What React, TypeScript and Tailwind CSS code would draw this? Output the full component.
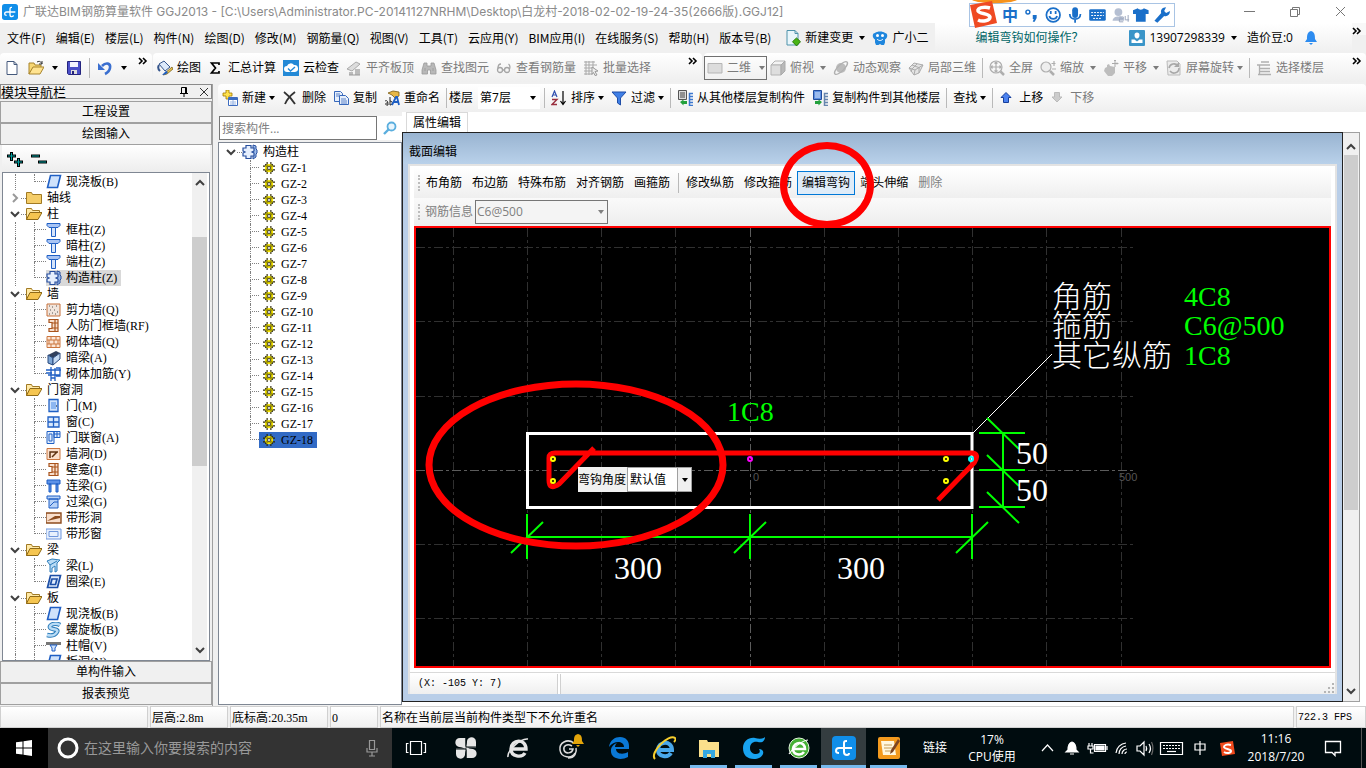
import type { ReactNode } from "react";

const blue = "#1f5fc4";

const icons: Record<string, ReactNode> = {
  new: <path d="M3 1.5h7l3 3v10H3zM10 1.5v3h3" fill="#fff" stroke="#44597c" />,
  open: (
    <>
      <path d="M1 14V3h5l1 2h6v3H5z" fill="#f7d774" stroke="#a8842c" />
      <path d="M1 14l4-7h11l-4 7z" fill="#ffe390" stroke="#a8842c" />
      <path d="M9 2c3-1.500 4 0 5 2m0-3v3h-3" fill="none" stroke="#333" />
    </>
  ),
  save: (
    <>
      <path d="M1.500 1.500h13v13h-12l-1-1z" fill="#4b4fc8" stroke="#24247e" />
      <path d="M4 2h8v5H4z" fill="#f4f4ff" />
      <path d="M5 10h6v4H5z" fill="#ddd" />
      <path d="M6 11h2v3H6z" fill="#24247e" />
    </>
  ),
  undo: (
    <>
      <path d="M5 6c4-4 9-3 8 2-.5 3-3 5-5 6" fill="none" stroke="#3a6fd0" strokeWidth="2.600" />
      <path d="M1 3v7h7z" fill="#3a6fd0" />
    </>
  ),
  paint: (
    <>
      <path d="M2 4l5-3 6 6-5 4z" fill="#dce9fa" stroke="#36568c" />
      <path d="M2 5c-2 3 0 5 1 6" fill="none" stroke="#36568c" strokeWidth="2" />
      <path d="M15 7l-7 6-2 2 4-1 6-5z" fill="#e8c04a" stroke="#6b5310" strokeWidth=".7" />
      <path d="M5 15c3 0 5-1 6-3l-2-1z" fill={blue} />
    </>
  ),
  sigma: <path d="M11 5V3H3.500l4 5-4 5H11v-2" fill="none" stroke="#000" strokeWidth="1.700" />,
  cloud: (
    <>
      <path d="M0 0h16v16H0z" fill="#2389d6" />
      <path d="M4 12a3 3 0 010-6 4 4 0 017-1 3.500 3.500 0 011 7z" fill="#fff" />
      <path d="M5 8.500l2.500 2.500L12 7" fill="none" stroke="#2389d6" strokeWidth="1.400" />
    </>
  ),
  slab: (
    <>
      <path d="M1 9l9-7 4 2-8 7z" fill="#ddd" stroke="#aaa" />
      <path d="M3 12h4v3H3zM9 9h5v6H9z" fill="#bbb" />
      <path d="M3 15h11" stroke="#999" />
    </>
  ),
  binoc: <path d="M3 3h3v3h4V3h3l2 7v4H9.500v-4h-3v4H1v-4zM4 8v3M12 8v3" fill="#b8b8b8" stroke="#999" strokeWidth=".8" />,
  glasses: (
    <g fill="none" stroke="#a5a5a5" strokeWidth="1.300">
      <circle cx="4" cy="10" r="2.500" />
      <circle cx="11" cy="10" r="2.500" />
      <path d="M6.500 10h2M2 8c0-3 1-4 3-4M13.500 9c1-3 .5-4-1-5" />
    </g>
  ),
  grid: (
    <>
      <path d="M1 2h11M1 5h13M1 8h10M1 11h8M1 14h8M3 1v14M6 1v14M10 1v8" stroke="#a9a9a9" fill="none" />
      <path d="M9 7l6 4-3 .5 2 3.500-2 .5-1.500-3-1.500 2z" fill="#eee" stroke="#999" />
    </>
  ),
  rect2d: <path d="M1 3.500h14v9.500H1z" fill="#dcdcdc" stroke="#b5b5b5" />,
  cube: (
    <>
      <path d="M1 5l4-4h10l-4 4z" fill="#f4f4f4" stroke="#b4b4b4" />
      <path d="M1 5h10v10H1z" fill="#dedede" stroke="#b4b4b4" />
      <path d="M11 5l4-4v10l-4 4z" fill="#b9b9b9" stroke="#aaa" />
    </>
  ),
  planet: (
    <>
      <circle cx="8" cy="8" r="5" fill="#bcbcbc" />
      <ellipse cx="8" cy="8" rx="8.500" ry="3" fill="none" stroke="#b0b0b0" strokeWidth="1.300" transform="rotate(-45 8 8)" />
    </>
  ),
  local3d: (
    <g fill="#e4e4e4" stroke="#acacac">
      <path d="M1 8l5-5 9 2-4 8-5 2z" />
      <path d="M1 8l6 2 8-5M7 10l-1 5M4 5l8 3M9 4L4 9l-1 3M11 8v5" fill="none" />
    </g>
  ),
  full: (
    <g fill="none" stroke="#aeaeae" strokeWidth="1.200">
      <circle cx="7" cy="7" r="6" />
      <path d="M7 2v10M2 7h10M5.500 3.500L7 2l1.500 1.500M5.500 10.500L7 12l1.500-1.500M3.500 5.500L2 7l1.500 1.500M10.500 5.500L12 7l-1.500 1.500" />
      <path d="M11.500 11.500l3.500 3.500" strokeWidth="2.500" />
    </g>
  ),
  zoom: (
    <g fill="none" stroke="#aeaeae" strokeWidth="1.200">
      <circle cx="6" cy="7" r="5" fill="#eee" />
      <path d="M10 11l4 4" strokeWidth="2.500" />
      <path d="M14 1v5M11.500 3.500h4M12 9h4" />
    </g>
  ),
  pan: (
    <>
      <path d="M2 8l2-1V5l2-1 1 2 5 1v6l-3 3H5l-4-5z" fill="#bdbdbd" />
      <path d="M12 0v7M9 3.500h6M11 1l1-1 1 1M14 2.500l1 1-1 1" stroke="#aaa" fill="none" />
    </>
  ),
  rotate: (
    <>
      <path d="M1 1h10l3 3v11H2z" fill="#ececec" stroke="#bbb" />
      <path d="M3 8a5 5 0 019-2M13 8a5 5 0 01-9 3" fill="none" stroke="#a8a8a8" strokeWidth="1.600" />
      <path d="M13 2v5H8z" fill="#a8a8a8" />
    </>
  ),
  floors: <path d="M1 5h13M5 2h8M3 8.500h11M3 11.500h11M2 14.500h13M3.500 5v9" fill="none" stroke="#b0b0b0" strokeWidth="1.300" />,
  add: (
    <>
      <path d="M4 0h3v3h3v3H7v3H4V6H1V3h3z" fill="#ffe24d" stroke="#a27a00" strokeWidth=".8" />
      <path d="M6.500 7.500h9v8h-9z" fill="#fff" stroke="#3d6cc0" />
      <path d="M7 8h8v2H7z" fill="#3d6cc0" />
      <path d="M8 12h6M8 14h6M11 10v5" stroke="#9cb7e4" />
    </>
  ),
  del: <path d="M2 2c4 3 8 7 11 12M13 2C9 5 5 9 3 14" fill="none" stroke="#333" strokeWidth="1.800" />,
  copy: (
    <g fill="#e6effc" stroke="#3768bb">
      <path d="M1.500 1.500h6l2 2v8h-8z" />
      <path d="M6.500 5.500h6l3 3v6h-9z" />
      <path d="M3 4h4M3 6h3M8 9h5M8 11h6M8 13h6" strokeWidth=".8" />
    </g>
  ),
  rename: (
    <>
      <path d="M4 3l5-2 6 1v4l-4 2-3-3z" fill="#e7b746" stroke="#7a5a12" strokeWidth=".8" />
      <path d="M1 11c2-1 3 0 3 4M4 13c-3-1-3 3 0 2M6 7v8c3 0 3-4 0-4" fill="none" stroke="#222" />
      <path d="M8 15l4-8h1l2 8M10 12h4" fill="none" stroke={blue} strokeWidth="1.800" />
    </>
  ),
  sort: (
    <>
      <path d="M1 7l2.500-6L6 7M2 5h3" fill="none" stroke="#2f4fb0" strokeWidth="1.200" />
      <path d="M1 9.500h5l-5 5h5" fill="none" stroke="#9a2f3f" strokeWidth="1.400" />
      <path d="M12 1v13M9.500 11l2.500 3.500 2.500-3.500" fill="none" stroke="#000" strokeWidth="1.200" />
    </>
  ),
  filter: <path d="M1 2h14L9.500 8v7l-3-2V8z" fill="#3f7fe6" stroke="#1f4da6" />,
  fromFloor: (
    <>
      <path d="M1.500.5h8v9h-8z" fill="#ddd" stroke="#555" />
      <path d="M3 3h5M3 5h5M3 7h5" stroke="#444" />
      <path d="M16 3.500h-3.500v12H16M12.500 6.500H16M12.500 9.500H16M12.500 12.500H16" stroke="#3c78cf" strokeWidth="1.500" fill="none" />
      <path d="M3 12l3.500-2.500V11H10v3H6.500v1.500z" fill="#23a13c" />
    </>
  ),
  toFloor: (
    <>
      <path d="M1.500.5h8v9h-8z" fill="#5d8fe0" stroke="#224c9c" />
      <path d="M3 3h5M3 5h5M3 7h5" stroke="#dbe7fb" />
      <path d="M16 3.500h-3.500v12H16M12.500 6.500H16M12.500 9.500H16M12.500 12.500H16" stroke="#6685ad" strokeWidth="1.500" fill="none" />
      <path d="M10 12L6.500 9.500V11H3v3h3.500v1.500z" fill="#23a13c" />
    </>
  ),
  up: <path d="M7 2.500l5 5H9.500v5h-5v-5H2z" fill="#4b82f0" stroke="#173f9c" />,
  down: <path d="M7 12l5-5H9.500V2.500h-5V7H2z" fill="#ccc" stroke="#bbb" />,
  doc: (
    <>
      <path d="M2 .5h8l3 3V15H2z" fill="#eaf6fb" stroke="#4f93ab" />
      <path d="M10 .5v3h3" fill="none" stroke="#4f93ab" />
      <path d="M11.500 8l4 3.700-4 4.200-4-4.200z" fill="#48b414" stroke="#2a7a08" />
    </>
  ),
  owl: (
    <>
      <path d="M3 3c2-2 8-2 10 0 3 0 3 5 0 6.500v3L12 15H9.500L8 14l-1.500 1H4l-1-2.500v-3C0 8 0 3 3 3z" fill="#1f86dd" />
      <circle cx="5.500" cy="5.500" r="1.500" fill="#fff" />
      <circle cx="10.500" cy="5.500" r="1.500" fill="#fff" />
      <path d="M5 9c2 2 4 2 6 0" stroke="#fff" fill="none" />
    </>
  ),
  user: (
    <>
      <rect width="16" height="16" rx="1" fill="#3a95c8" />
      <path d="M5.500 5a2.500 2.500 0 015 0c0 2-1 3.500-2.500 3.500S5.500 7 5.500 5zM2.500 13V9.500h3l2.500 2 2.500-2h3V13z" fill="#fff" />
    </>
  ),
  bell: <path d="M8 1c4 1 4 5 4 8l2 3H2l2-3c0-3 0-7 4-8zM6 13h4l-2 2z" fill="#2d8cf0" />,
  folder: <path d="M.5 13.500v-11h5l1 2h9v9z" fill="#f5cd68" stroke="#a17a24" />,
  folderOpen: (
    <>
      <path d="M.5 13.500v-11h5l1 2h7v3H4z" fill="#ffe9a6" stroke="#a17a24" />
      <path d="M.5 13.500L4 6.500h12l-4 7z" fill="#f5c550" stroke="#8f6a17" />
    </>
  ),
  board: <path d="M4.500 1.500h10l-3 12h-10z" fill="#cfe2fb" stroke={blue} strokeWidth="1.600" />,
  column: (
    <>
      <path d="M1 1.500h13v2l-2 2H3l-2-2z" fill="#a8c4f4" stroke={blue} />
      <path d="M5.500 5.500h4v9h-4z" fill="#d5e4fb" stroke={blue} />
    </>
  ),
  gz: (
    <>
      <path d="M11 1l3 1v3l1 1v3l-1 1v3l-3 2z" fill="#9dbcec" stroke="#274f9f" />
      <path d="M4 1.500h5V4h3v3l-2 1 2 1v3H9v2.500H4V12H1V9l2-1-2-1V4h3z" fill="#e6effd" stroke="#274f9f" strokeWidth="1.200" />
    </>
  ),
  wallDots: (
    <>
      <path d="M1 2h13v12H1z" fill="#f1e5dc" stroke="#c6713b" />
      <path d="M3 4h1M6 5h1M10 4h1M4 8h1M8 8h1M11 10h1M3 12h1M6 11h1M9 12h1" stroke="#555" />
    </>
  ),
  wallI: <path d="M3 1.500h9v12H3v-3h3v-6H3zM9 2v12M6 5h6M6 10h6" fill="#f8dfcd" stroke="#a9541d" strokeWidth="1.200" />,
  brick: <path d="M1 2.500h13v11H1zM1 6h13M1 10h13M5 3v3M10 3v3M3 6v4M8 6v4M12 6v4M5 10v4M10 10v4" fill="#fbe6d7" stroke="#cb763f" />,
  darkBeam: (
    <>
      <path d="M2 5l8-4 4 2-7 5z" fill="#32415d" />
      <path d="M2 5l5 3v7l-5-2z" fill="#7da6d6" stroke="#28487c" />
      <path d="M7 8l7-5v6l-7 6z" fill="#c6dbf3" stroke="#28487c" />
    </>
  ),
  mesh: <path d="M0 4h15M2 9h12M5 1v14M9 2v13M0 7h6M10 2h4v8h-4M5 12h4" fill="none" stroke={blue} strokeWidth="1.300" />,
  door: (
    <>
      <path d="M3 1.500h9v12H3z" fill="#cfe3fc" stroke={blue} strokeWidth="1.300" />
      <path d="M5 4h5v7H5z" fill="#8db7f1" />
      <path d="M10 8h1" stroke="#111" />
    </>
  ),
  window: <path d="M2 3h11v10H2zM7.500 3v10M2 8h11" fill="#d8e9fd" stroke={blue} strokeWidth="1.300" />,
  doorWindow: <path d="M1 1.500h7v12H1zM3 4h3v7H3zM8 1.500h6v6H8zM11 1.500v6M8 4h6" fill="#e1edfd" stroke={blue} />,
  hole: (
    <>
      <path d="M1 2.500h13v11H1z" fill="#fbe0cd" stroke="#cb763f" />
      <path d="M4 12V6h8M6 11l5-5" fill="none" stroke="#5f3212" strokeWidth="1.500" />
    </>
  ),
  linkBeam: <path d="M1 2h13v4H1zM3 6h2v8H3zM10 6h2v8h-2z" fill="#5d92e8" stroke={blue} />,
  overBeam: <path d="M1 2h13v3H1zM3 5h9v9H3zM4 12l4-4h4" fill="#b7d2f8" stroke={blue} />,
  stripHole: (
    <>
      <path d="M0 3h15v10H0z" fill="#f9dfcc" stroke="#8d4c1e" strokeWidth="1.400" />
      <path d="M1 11l8-5h5v2z" fill="#8d4c1e" />
    </>
  ),
  stripWindow: <path d="M0 3h15v10H0zM3 5.500h9v5H3z" fill="#e7f0fd" stroke="#6e96dc" />,
  beam: <path d="M1 3l5-2 8 1-3 3v8l-2 1V8l-3 2v4H4V7zM4 7l7-4" fill="#b9dcf6" stroke="#2d7dbb" />,
  ring: <path d="M4.500 1.500h10l-3 12h-10zM6 5h5l-1.500 5.500h-5z" fill="#e2edfc" stroke="#1d4fa6" strokeWidth="1.700" />,
  spiral: (
    <>
      <path d="M14 3C9 0 3 3 4 5.500s9 1 7 4.500-6 4-10 3" fill="none" stroke="#2d7dbb" strokeWidth="4.500" />
      <path d="M14 3C9 0 3 3 4 5.500s9 1 7 4.500-6 4-10 3" fill="none" stroke="#b9dcf6" strokeWidth="2.500" />
    </>
  ),
  cap: (
    <>
      <path d="M0 4h15v3H0z" fill="#777" />
      <path d="M4 7h7l-2 3v3H6v-3z" fill="#cfe2fb" stroke={blue} />
    </>
  ),
  gear: (
    <>
      <path d="M5.500 0v16M10.500 0v16M0 5.500h16M0 10.500h16M3 3l10 10M13 3L3 13" stroke="#2a2600" strokeWidth="1.500" />
      <circle cx="8" cy="8" r="5.500" fill="#f6e600" />
      <path d="M5.500 3.500v9M10.500 3.500v9M3.500 5.500h9M3.500 10.500h9" stroke="#6b6400" />
      <circle cx="8" cy="8" r="2" fill="#fff" stroke="#222" />
    </>
  ),
};

function Ico({ n, s = "size-4" }: { n: string; s?: string }) {
  return (
    <svg viewBox="0 0 16 16" className={`${s} shrink-0`} aria-hidden="true">
      {icons[n]}
    </svg>
  );
}

function Caret() {
  return (
    <svg viewBox="0 0 6 4" className="h-1 w-1.5 shrink-0" aria-hidden="true">
      <path d="M0 0h6L3 4z" fill="currentColor" />
    </svg>
  );
}

function More() {
  return (
    <svg viewBox="0 0 10 8" className="h-2 w-2.5 shrink-0" aria-hidden="true">
      <path d="M1 1l3 3-3 3M5 1l3 3-3 3" fill="none" stroke="#000" strokeWidth="1.600" />
    </svg>
  );
}

function Sep() {
  return <span className="-mx-px h-5 w-px shrink-0 bg-[#b9b9b9]" />;
}

// dotted handle at the left end of a tool strip
function Grip() {
  return <span className="h-4 w-0 shrink-0 border-l-2 border-dotted border-[#bdbdbd]" />;
}

function Tool({ icon, label, off, caret, wide }: { icon?: string; label: string; off?: boolean; caret?: boolean; wide?: boolean }) {
  return (
    <button className={`flex shrink-0 items-center gap-1 whitespace-nowrap ${off ? "text-[#7b7b7b]" : "text-black"}`}>
      {icon && <Ico n={icon} />}
      {label}
      {caret && (
        <span className={wide ? "pl-0.5" : "-ml-px"}>
          <Caret />
        </span>
      )}
    </button>
  );
}

const menus = ["文件(F)", "编辑(E)", "楼层(L)", "构件(N)", "绘图(D)", "修改(M)", "钢筋量(Q)", "视图(V)", "工具(T)", "云应用(Y)", "BIM应用(I)", "在线服务(S)", "帮助(H)", "版本号(B)"];

type Node = { t: string; i?: string; dir?: "open" | "shut"; last?: boolean; sel?: boolean };

const tree: Node[] = [
  { t: "现浇板(B)", i: "board", last: true },
  { t: "轴线", dir: "shut" },
  { t: "柱", dir: "open" },
  { t: "框柱(Z)", i: "column" },
  { t: "暗柱(Z)", i: "column" },
  { t: "端柱(Z)", i: "column" },
  { t: "构造柱(Z)", i: "gz", last: true, sel: true },
  { t: "墙", dir: "open" },
  { t: "剪力墙(Q)", i: "wallDots" },
  { t: "人防门框墙(RF)", i: "wallI" },
  { t: "砌体墙(Q)", i: "brick" },
  { t: "暗梁(A)", i: "darkBeam" },
  { t: "砌体加筋(Y)", i: "mesh", last: true },
  { t: "门窗洞", dir: "open" },
  { t: "门(M)", i: "door" },
  { t: "窗(C)", i: "window" },
  { t: "门联窗(A)", i: "doorWindow" },
  { t: "墙洞(D)", i: "hole" },
  { t: "壁龛(I)", i: "wallI" },
  { t: "连梁(G)", i: "linkBeam" },
  { t: "过梁(G)", i: "overBeam" },
  { t: "带形洞", i: "stripHole" },
  { t: "带形窗", i: "stripWindow", last: true },
  { t: "梁", dir: "open" },
  { t: "梁(L)", i: "beam" },
  { t: "圈梁(E)", i: "ring", last: true },
  { t: "板", dir: "open" },
  { t: "现浇板(B)", i: "board" },
  { t: "螺旋板(B)", i: "spiral" },
  { t: "柱帽(V)", i: "cap" },
  { t: "板洞(N)", i: "board" },
];

function Chevron({ d, s = "size-3" }: { d: "down" | "right" | "up"; s?: string }) {
  const p = { down: "M2 4l4 4 4-4", right: "M4 2l4 4-4 4", up: "M2 8l4-4 4 4" }[d];
  return (
    <svg viewBox="0 0 12 12" className={`${s} shrink-0`} aria-hidden="true">
      <path d={p} fill="none" stroke={d === "right" ? "#999" : "#404040"} strokeWidth="2" />
    </svg>
  );
}

function TreeRow({ n }: { n: Node }) {
  if (n.dir)
    return (
      <li className="flex h-4 items-center pl-1.5">
        <Chevron d={n.dir === "open" ? "down" : "right"} />
        <span className="w-[5px] border-t border-dotted border-[#808080]" />
        <Ico n={n.dir === "open" ? "folderOpen" : "folder"} />
        <span className="pl-[5px]">{n.t}</span>
      </li>
    );
  return (
    <li className="flex h-4 pl-3">
      <span className="w-[19px] border-l border-dotted border-[#808080]" />
      <span className="flex w-3 flex-col">
        <span className="h-2 border-b border-l border-dotted border-[#808080]" />
        {!n.last && <span className="h-2 border-l border-dotted border-[#808080]" />}
      </span>
      <span className={`flex items-center gap-1 pr-1 whitespace-nowrap ${n.sel ? "bg-[#d9d9d9]" : ""}`}>
        <Ico n={n.i!} />
        {n.t}
      </span>
    </li>
  );
}

function NavPanel() {
  const bar = "h-[22px] shrink-0 border border-[#a0a0a0] bg-[#f0f0f0] text-center";
  return (
    <aside className="flex w-[213px] shrink-0 flex-col border-r border-[#a0a0a0] pb-px">
      <div className="mb-0.5 flex h-[15px] shrink-0 items-center border border-[#8a8a8a] text-[13px] leading-3">
        <h2 className="flex-1">模块导航栏</h2>
        <svg viewBox="0 0 10 12" className="h-3 w-2.5" aria-hidden="true">
          <path d="M2.500 1.500h5v6h-5zM1 7.500h8M5 8v3M6.500 2v5" fill="none" stroke="#000" />
        </svg>
        <svg viewBox="0 0 10 10" className="mr-0.5 ml-2.5 size-2.5" aria-hidden="true">
          <path d="M1 1l8 8M9 1L1 9" stroke="#333" />
        </svg>
      </div>
      <button className={bar}>工程设置</button>
      <button className={bar}>绘图输入</button>
      <div className="mx-0.5 flex h-[27px] shrink-0 items-center gap-1.5 bg-linear-to-b from-white to-[#ededed] px-1">
        <svg viewBox="0 0 18 16" className="h-4 w-[18px]" aria-hidden="true">
          <path d="M1 5h9M5.500 1v9M8 11h9M12.500 7v9" stroke="#000" strokeWidth="3" />
          <path d="M2 5h7M5.500 2v7M9 11h7M12.500 8v7" stroke="#00a0a0" />
        </svg>
        <svg viewBox="0 0 18 16" className="h-4 w-[18px]" aria-hidden="true">
          <path d="M1 5h9M8 11h9" stroke="#000" strokeWidth="3" />
          <path d="M2 5h7M9 11h7" stroke="#00a0a0" />
        </svg>
      </div>
      <div className="mx-0.5 flex min-h-0 flex-1 overflow-hidden border border-[#7f8793] bg-white">
        <ul className="flex-1 overflow-hidden pt-px font-['Liberation_Serif','Noto_Sans_CJK_SC',serif]">
          {tree.map((n, k) => (
            <TreeRow key={k} n={n} />
          ))}
        </ul>
        <div className="mr-0.5 flex w-[15px] flex-col items-center justify-between bg-[#f0f0f0] py-1">
          <Chevron d="up" />
          <span className="mt-12 h-[229px] w-full bg-[#cdcdcd]" />
          <span className="flex-1" />
          <Chevron d="down" />
        </div>
      </div>
      <button className={bar}>单构件输入</button>
      <button className={bar}>报表预览</button>
    </aside>
  );
}

function ComponentList() {
  const names = Array.from({ length: 18 }, (_, k) => `GZ-${k + 1}`);
  return (
    <section className="mb-px flex w-[184px] shrink-0 flex-col">
      <div className="flex h-[30px] shrink-0 items-center pt-0.5">
        <input aria-label="搜索构件" placeholder="搜索构件..." className="ml-px h-6 w-[158px] border border-[#767676] bg-white px-0.5 placeholder:text-[#808080]" />
        <button aria-label="搜索" className="flex h-6 flex-1 items-center justify-center bg-white">
          <svg viewBox="0 0 14 14" className="size-3.5" aria-hidden="true">
            <circle cx="8.500" cy="5.500" r="4" fill="#e8f5fd" stroke="#5aaede" strokeWidth="1.800" />
            <path d="M5.500 8.500L1 13" stroke="#5aaede" strokeWidth="2.400" />
          </svg>
        </button>
      </div>
      <div className="flex-1 overflow-hidden border border-[#7f8793] bg-white pt-px font-['Liberation_Serif','Noto_Sans_CJK_SC',serif]">
        <div className="flex h-4 items-center pl-1.5">
          <Chevron d="down" />
          <span className="w-[5px] border-t border-dotted border-[#808080]" />
          <Ico n="gz" />
          <span className="pl-[5px]">构造柱</span>
        </div>
        <ul>
          {names.map((t, k) => (
            <li key={t} className="flex h-4 pl-[31px]">
              <span className="flex w-[9px] flex-col">
                <span className="h-2 border-b border-l border-dotted border-[#808080]" />
                {k < 17 && <span className="h-2 border-l border-dotted border-[#808080]" />}
              </span>
              <span className={`flex items-center gap-1.5 px-1 ${k === 17 ? "bg-[#316ac5]" : ""}`}>
                <Ico n="gear" s="size-3" />
                {t}
              </span>
            </li>
          ))}
        </ul>
      </div>
    </section>
  );
}

const gridX = [453, 527, 601, 675, 824, 898, 972, 1046, 1121];
const gridY = [247, 321, 396, 544, 618];

function Drawing() {
  return (
    <div className="relative min-h-0 flex-1 overflow-hidden border-2 border-[#ff0000] bg-black">
      <svg className="absolute inset-0 size-full" aria-hidden="true">
        <g transform="translate(-416 -228)" fill="none">
          <g stroke="#303030" strokeDasharray="9 3 3 3">
            {gridX.map((x) => (
              <path key={x} d={`M${x}.5 228V668`} />
            ))}
            {gridY.map((y) => (
              <path key={y} d={`M416 ${y}.5H1134`} />
            ))}
            <path d="M750.500 228V668M416 470.500H1134" stroke="#5c5c5c" />
          </g>
          <g fill="#555" className="font-['Liberation_Sans',sans-serif] text-[11px]">
            <text x="753" y="481">0</text>
            <text x="1119" y="481">500</text>
          </g>
          <path d="M527.500 433.500H972V507.500H527.500z" stroke="#fff" strokeWidth="3" />
          <path d="M973 433L1052 354" stroke="#fff" />
          <g stroke="#0f0" strokeWidth="2">
            <path d="M527 537H972M527 514V559M750 514V559M972 514V559" />
            <path d="M543 522L511 553M766 522L734 553M988 522L956 553" />
            <path d="M1003 433V508M979 433H1025M979 470H1025M979 507H1025" />
            <path d="M987 418L1019 449M987 455L1019 486M987 492L1019 523" />
          </g>
          <path d="M594 448L559 484Q549 491 549 480V458Q549 453 555 453H972Q980 454 974 463L938 500" stroke="#f00" strokeWidth="5" />
          <g strokeWidth="2">
            <g stroke="#ff0">
              <circle cx="553" cy="459" r="2" />
              <circle cx="553" cy="481" r="2" />
              <circle cx="946" cy="459" r="2" />
              <circle cx="946" cy="481" r="2" />
            </g>
            <circle cx="750" cy="459" r="2" stroke="#f0f" />
            <circle cx="971" cy="459" r="2" stroke="#0ff" />
          </g>
          <g fill="#fff" className="font-['Liberation_Serif',serif] text-[32px]">
            <text x="614" y="579">300</text>
            <text x="837" y="579">300</text>
            <text x="1016" y="464">50</text>
            <text x="1016" y="501">50</text>
          </g>
          <g fill="#fff" className="font-['Noto_Sans_CJK_SC',sans-serif] text-[30px] font-light">
            <text x="1052" y="307">角筋</text>
            <text x="1052" y="336">箍筋</text>
            <text x="1052" y="366">其它纵筋</text>
          </g>
          <g fill="#0f0" className="font-['Liberation_Serif',serif] text-[28px]">
            <text x="1184" y="306">4C8</text>
            <text x="1184" y="335">C6@500</text>
            <text x="1184" y="365">1C8</text>
            <text x="727" y="421">1C8</text>
          </g>
          <ellipse cx="576" cy="465" rx="147" ry="81" stroke="#f00" strokeWidth="7" />
        </g>
      </svg>
      <div className="absolute top-[239px] left-[162px] flex h-[25px] items-center bg-[#f0f0f0]">
        <label htmlFor="hook" className="w-[49px] whitespace-nowrap">弯钩角度</label>
        <div className="relative flex h-full items-center border border-[#a0a0a0]">
          <select id="hook" className="h-full w-[63px] appearance-none bg-white px-0.5">
            <option>默认值</option>
          </select>
          <span className="pointer-events-none absolute inset-y-0 right-0 flex w-3.5 items-center justify-center border-l border-[#a0a0a0] bg-[#f0f0f0]">
            <Caret />
          </span>
        </div>
      </div>
    </div>
  );
}

function SectionEditor() {
  const left = ["布角筋", "布边筋", "特殊布筋", "对齐钢筋", "画箍筋"];
  const right = ["修改纵筋", "修改箍筋", "编辑弯钩", "端头伸缩"];
  return (
    <section className="flex min-w-0 flex-1 flex-col bg-white">
      <div className="flex h-5 shrink-0 pl-1">
        <h2 className="border-x border-t border-[#d9d9d9] bg-white px-1.5 leading-5 text-black">属性编辑</h2>
      </div>
      <div className="flex min-h-0 flex-1">
        <div className="relative mb-1 flex min-w-0 flex-1 flex-col border border-[#222] bg-[#b9cee8] px-[5px] pb-[7px]">
          <h3 className="-mx-[5px] h-[31px] shrink-0 bg-linear-to-b from-[#99b4d1] to-[#b9d1ea] pt-px pl-1.5 leading-9">截面编辑</h3>
          <div className="flex min-h-0 flex-1 flex-col border-2 border-b-0 border-[#e3e3e3] bg-white px-1 pt-0.5">
            <div className="flex h-[30px] shrink-0 items-center bg-linear-to-b from-white to-[#efefef] pl-1">
              <Grip />
              <div className="flex items-center pl-px">
                {left.map((t) => (
                  <button key={t} className="h-6 px-[5px]">{t}</button>
                ))}
                <span className="px-[3px] pr-0.5">
                  <span className="block h-5 w-px bg-[#b9b9b9]" />
                </span>
                {right.map((t) => (
                  <button key={t} className={t === "编辑弯钩" ? "h-6 border border-[#0078d7] bg-[#dfecf8] px-1" : "h-6 px-[5px]"}>{t}</button>
                ))}
                <button className="h-6 px-[5px] text-[#808080]">删除</button>
              </div>
            </div>
            <div className="flex h-7 shrink-0 items-center bg-linear-to-b from-[#fafafa] to-[#ededed] pl-1 text-[#808080]">
              <Grip />
              <label htmlFor="rebar" className="pr-0.5 pl-[5px]">钢筋信息</label>
              <div className="relative flex items-center">
                <select id="rebar" disabled className="h-6 w-[133px] appearance-none border border-[#767676] bg-[#f4f4f4] px-px opacity-100">
                  <option>C6@500</option>
                </select>
                <span className="pointer-events-none absolute right-1">
                  <Caret />
                </span>
              </div>
            </div>
            <Drawing />
            <div className="-mx-1 mt-1 flex h-[22px] shrink-0 gap-0.5 border-t border-[#d9d9d9] bg-white pt-px font-['Liberation_Mono',monospace] text-[10px]">
              <span className="w-[148px] border-r border-[#d0d0d0] bg-linear-to-b from-white to-[#efefef] pl-2 leading-5 whitespace-pre">(X: -105 Y: 7)</span>
              <span className="flex flex-1 items-end justify-end border-l border-[#d0d0d0] bg-linear-to-b from-white to-[#efefef]">
                <svg viewBox="0 0 12 12" className="size-3" aria-hidden="true">
                  <path d="M9 1h2v2H9zM9 5h2v2H9zM5 5h2v2H5zM9 9h2v2H9zM5 9h2v2H5zM1 9h2v2H1z" fill="#b5b5b5" />
                </svg>
              </span>
            </div>
          </div>
          <div className="pointer-events-none absolute top-[9px] left-[377px] h-[86px] w-[94px] rounded-[50%] border-[7px] border-[#ff0000]" />
        </div>
        <div className="mr-1.5 mb-1 flex w-[17px] shrink-0 flex-col items-center border border-l-0 border-[#a0a0a0] bg-[#f0f0f0] py-1">
          <span className="h-4 pt-1">
            <Chevron d="up" />
          </span>
          <span className="mt-0.5 h-[355px] w-3.5 bg-[#cdcdcd]" />
          <span className="flex-1" />
          <Chevron d="down" />
        </div>
      </div>
    </section>
  );
}

function TitleBar() {
  return (
    <header className="relative flex h-[23px] shrink-0 items-center bg-white pl-0.5 text-[#8a8a8a]">
      <AppLogo s="size-4" />
      <h1 className="flex-1 pl-[5px] font-['Inter','Noto_Sans_CJK_SC',sans-serif] whitespace-nowrap">广联达BIM钢筋算量软件 GGJ2013 - [C:\Users\Administrator.PC-20141127NRHM\Desktop\白龙村-2018-02-02-19-24-35(2666版).GGJ12]</h1>
      <svg viewBox="0 0 110 16" className="mr-4 h-4 w-[110px]" aria-hidden="true">
        <path d="M4 7.500h11M50.500 5.500h7v7h-7zM52.500 5.500v-2h7v7h-2M96 3l9 9M105 3l-9 9" fill="none" stroke="#777" />
      </svg>
      <div className="absolute top-[3px] right-[191px] flex h-6 w-[206px] items-center justify-between border border-[#a9c4e4] bg-white pr-1 pl-8 text-[#1a6fc9]">
        <svg viewBox="0 0 48 30" className="absolute -top-[4px] left-0 h-[30px] w-12" aria-hidden="true">
          <path d="M2 0a24 5 0 0045 0z" fill="#f7921c" />
          <path d="M0 5l22-4 5 22-22 5z" fill="#ef4a22" />
          <path d="M20 8c-6-2-13 0-12 3 1 3 11 2 12 6 0 4-8 5-12 3" fill="none" stroke="#fff" strokeWidth="3.500" />
        </svg>
        <strong className="text-base leading-4">中</strong>
        <svg viewBox="0 0 150 18" className="h-[18px] w-[146px]" fill="#1a6fc9" aria-hidden="true">
          <circle cx="4" cy="6" r="2" fill="none" stroke="#1a6fc9" strokeWidth="1.500" />
          <path d="M9 9h4v3l-2 4H9l1-3H9z" />
          <g fill="none" stroke="#1a6fc9" strokeWidth="1.800">
            <circle cx="30" cy="9" r="7" />
            <path d="M26 10c1 4 7 4 8 0M27.500 5v3M32.500 5v3" />
            <path d="M47 8c0 7 11 7 11 0M52.500 13v4" />
          </g>
          <rect x="49.500" y="1" width="6" height="11" rx="3" />
          <rect x="67" y="3" width="17" height="12" rx="1.500" />
          <path d="M69 6.500h13M69 9.500h13M71 12.500h9" stroke="#fff" strokeDasharray="2 1" />
          <g fill="#b5bfd2">
            <circle cx="97" cy="6" r="4" />
            <path d="M91 15c0-6 12-6 12 0z" />
            <path d="M98 11h4v2h-4v3h4M104 10v4h4M107 9v7" fill="none" stroke="#9aa6bd" />
          </g>
          <path d="M112 4l5-2c1 2 5 2 6 0l5 2v4h-3v8h-10V8h-3z" />
          <path d="M134 15l7-8c-1-3 1-6 5-6l-2 4 2 2 4-2c0 4-3 6-6 5l-7 7z" />
        </svg>
      </div>
    </header>
  );
}

function AppLogo({ s }: { s: string }) {
  return (
    <svg viewBox="0 0 24 24" className={`${s} shrink-0`} aria-hidden="true">
      <rect width="24" height="24" rx="4" fill="#108ee9" />
      <path d="M15 5h-1q-2 0-2 2v9q0 3 3 3 2 0 2-2M20 12H7q-3 0-3 3 0 2 3 2" fill="none" stroke="#fff" strokeWidth="2" />
    </svg>
  );
}

function MenuBar() {
  return (
    <nav className="flex h-[29px] shrink-0 items-center bg-[#f0f0f0] pl-[7px] whitespace-nowrap">
      <div className="flex gap-2.5 font-['Noto_Sans_CJK_SC',sans-serif]">
        {menus.map((m) => (
          <button key={m}>{m}</button>
        ))}
      </div>
      <div className="flex items-center gap-[7px] pl-3.5">
        <Tool icon="doc" label="新建变更" caret wide />
        <Tool icon="owl" label="广小二" />
      </div>
      <a href="#help" className="ml-[7px] self-stretch bg-linear-to-b from-white to-[#f0f0f0] px-10 leading-[29px] text-[#006666]">编辑弯钩如何操作？</a>
      <div className="flex flex-1 items-center gap-2.5 self-stretch bg-linear-to-b from-white to-[#f0f0f0] pl-1.5">
        <Tool icon="user" label="13907298339" caret wide />
        <button>造价豆:0</button>
        <Ico n="bell" s="size-4" />
      </div>
      <span className="self-start bg-[#f8f8f8] pt-1 pr-1">
        <More />
      </span>
    </nav>
  );
}

function MainToolbar() {
  const strip = "flex items-center self-stretch rounded-sm bg-linear-to-b from-white to-[#efefef]";
  return (
    <div className="flex h-8 shrink-0 bg-[#f0f0f0] pt-px pb-0.5">
      <div className={`${strip} w-[152px] gap-2 pl-1`}>
        <Ico n="new" />
        <Ico n="open" />
        <Caret />
        <Ico n="save" />
        <Sep />
        <Ico n="undo" />
        <Caret />
        <span className="mr-1 ml-auto self-start pt-1">
          <More />
        </span>
      </div>
      <div className={`${strip} ml-px w-[549px] gap-[7px] pl-1`}>
        <Tool icon="paint" label="绘图" />
        <Tool icon="sigma" label="汇总计算" />
        <Tool icon="cloud" label="云检查" />
        <Tool icon="slab" label="平齐板顶" off />
        <Tool icon="binoc" label="查找图元" off />
        <Tool icon="glasses" label="查看钢筋量" off />
        <Tool icon="grid" label="批量选择" off />
        <span className="mr-1 ml-auto self-start pt-1">
          <More />
        </span>
      </div>
      <div className={`${strip} ml-0.5 flex-1 gap-[7px]`}>
        <button className="-mr-1 flex h-6 w-[63px] items-center gap-1 border border-[#707070] pl-0.5 text-[#7b7b7b]">
          <Ico n="rect2d" />
          二维
          <span className="pl-1">
            <Caret />
          </span>
        </button>
        <Tool icon="cube" label="俯视" off caret wide />
        <Tool icon="planet" label="动态观察" off />
        <Tool icon="local3d" label="局部三维" off />
        <Sep />
        <Tool icon="full" label="全屏" off />
        <Tool icon="zoom" label="缩放" off caret wide />
        <Tool icon="pan" label="平移" off caret wide />
        <Tool icon="rotate" label="屏幕旋转" off caret />
        <Sep />
        <Tool icon="floors" label="选择楼层" off />
        <span className="mr-1 ml-auto self-start pt-1">
          <More />
        </span>
      </div>
    </div>
  );
}

function ComponentToolbar() {
  return (
    <div className="flex h-7 shrink-0 items-center gap-[7px] rounded-sm bg-linear-to-b from-white to-[#efefef] pl-1 whitespace-nowrap">
      <Tool icon="add" label="新建" caret />
      <Tool icon="del" label="删除" />
      <Tool icon="copy" label="复制" />
      <Tool icon="rename" label="重命名" />
      <Sep />
      <label htmlFor="floor" className="-ml-1">楼层</label>
      <div className="relative -mx-0.5 flex items-center">
        <select id="floor" className="h-[22px] w-[62px] appearance-none bg-white px-0.5">
          <option>第7层</option>
        </select>
        <span className="pointer-events-none absolute right-1">
          <Caret />
        </span>
      </div>
      <Sep />
      <Tool icon="sort" label="排序" caret />
      <Tool icon="filter" label="过滤" caret />
      <Sep />
      <Tool icon="fromFloor" label="从其他楼层复制构件" />
      <Tool icon="toFloor" label="复制构件到其他楼层" />
      <Sep />
      <Tool label="查找" caret />
      <Sep />
      <Tool icon="up" label="上移" />
      <Tool icon="down" label="下移" off />
    </div>
  );
}

function StatusBar() {
  const cell = "border border-[#d0d0d0] bg-linear-to-b from-white to-[#f0f0f0] pl-px leading-[22px] whitespace-pre";
  return (
    <footer className="flex h-[22px] shrink-0 gap-0.5 bg-[#f0f0f0] font-['Liberation_Serif','Noto_Sans_CJK_SC',serif]">
      <span className={`${cell} w-[148px]`} />
      <span className={`${cell} w-[78px]`}>层高:2.8m</span>
      <span className={`${cell} w-[98px]`}>底标高:20.35m</span>
      <span className={`${cell} w-12`}>0</span>
      <span className={`${cell} flex-1`}>名称在当前层当前构件类型下不允许重名</span>
      <span className={`${cell} w-[70px] font-['Liberation_Mono',monospace] text-[10px]`}>722.3 FPS</span>
    </footer>
  );
}

const apps: { name: string; art: ReactNode; run?: boolean; on?: boolean }[] = [
  { name: "Edge", art: <path d="M2 11C3 4 8 1 13 1c6 0 9 4 9 9v3H9c0 5 7 6 12 3v5c-7 4-18 2-17-7 0-3 3-6 6-7-1 1-2 2-2 4h9c0-6-10-7-15 0z" fill="#0a78d6" /> },
  {
    name: "IE",
    art: (
      <>
        <path d="M6 14h14c0-10-14-9-14 0 0 7 10 8 13 3" fill="none" stroke="#4aa8ea" strokeWidth="4" />
        <path d="M3 23C-3 17 17-3 23 2c1 1 0 3-1 4" fill="none" stroke="#f7cf2e" strokeWidth="2" />
      </>
    ),
  },
  {
    name: "文件资源管理器",
    run: true,
    art: (
      <>
        <path d="M2 4h8l1 2h11v15H2z" fill="#fbe08b" />
        <path d="M6 22v-8h12v8h-4v-4h-4v4z" fill="#36a8e0" />
      </>
    ),
  },
  { name: "广联达G", run: true, art: <path d="M23 1c0 4-3 6-7 5-5-1-8 2-8 6s3 6 6 6 5-2 3-5c3 0 5 2 4 5-1 3-5 5-9 5C5 23 1 19 1 12 1 5 7 1 13 2c4 1 8 1 10-1z" fill="#18a3f0" /> },
  {
    name: "360浏览器",
    run: true,
    art: (
      <>
        <circle cx="12" cy="12" r="10" fill="#45b035" stroke="#e4f5df" />
        <path d="M6 13h12c0-8-11-8-12 0 0 6 8 7 11 3" fill="none" stroke="#fff" strokeWidth="2.600" />
        <path d="M2 18C6 12 14 5 21 4" fill="none" stroke="#fff" strokeWidth="1.200" />
      </>
    ),
  },
  { name: "GGJ", run: true, on: true, art: null },
  {
    name: "笔记",
    run: true,
    art: (
      <>
        <rect x="1" y="1" width="22" height="22" rx="2" fill="#f39a1e" />
        <path d="M4 5h13l2 14H6z" fill="#fff7df" />
        <path d="M7 9h8M7 12h9M8 15h7" stroke="#c49a54" />
        <path d="M21 3l-7 11-1 4 3-2 7-11z" fill="#7d4522" />
      </>
    ),
  },
];

function Taskbar() {
  const slot = "flex h-full items-center justify-center";
  return (
    <div className="flex h-10 shrink-0 items-center bg-[#000c0f] text-white">
      <button aria-label="开始" className={`${slot} w-12 bg-black`}>
        <svg viewBox="0 0 16 16" className="size-4" fill="#fff" aria-hidden="true">
          <path d="M0 2.300l6.500-.9v6.100H0zM7.500 1.200L16 0v7.500H7.500zM0 8.500h6.500v6.100L0 13.700zM7.500 8.500H16V16l-8.500-1.200z" />
        </svg>
      </button>
      <div className="flex h-full w-[344px] items-center bg-[#333] pr-3 pl-2">
        <svg viewBox="0 0 24 24" className="size-6 shrink-0" aria-hidden="true">
          <circle cx="12" cy="12" r="9" fill="none" stroke="#fff" strokeWidth="3" />
        </svg>
        <input aria-label="搜索" placeholder="在这里输入你要搜索的内容" className="min-w-0 flex-1 bg-transparent pl-1 text-sm placeholder:text-[#999]" />
        <svg viewBox="0 0 16 18" className="h-[18px] w-4" fill="none" stroke="#999" strokeWidth="1.200" aria-hidden="true">
          <path d="M5.500 1.500h5v9h-5zM3 9v4h10V9M8 13v4M5 17h6" />
        </svg>
      </div>
      <button aria-label="任务视图" className={`${slot} w-12`}>
        <svg viewBox="0 0 22 16" className="h-4 w-[22px]" fill="none" stroke="#fff" strokeWidth="1.200" aria-hidden="true">
          <path d="M5.500 1.500h11v13h-11zM3.500 3.500h-2v9h2M18.500 3.500h2v9h-2" />
        </svg>
      </button>
      <button aria-label="fan" className={`${slot} w-[52px]`}>
        <svg viewBox="0 0 24 24" className="size-6" fill="#e6e6e6" aria-hidden="true">
          <path d="M11.500 10V2H6C0 2 0 10 5 11c3 0 5 1 6 2 1-1 .5-2 .5-3z" />
          <path d="M14 11.500h8V6c0-6-8-6-9-1 0 3-1 5-2 6 1 1 2 .5 3 .5z" />
          <path d="M12.500 14v8H18c6 0 6-8 1-9-3 0-5-1-6-2-1 1-.5 2-.5 3z" />
          <path d="M10 12.500H2V18c0 6 8 6 9 1 0-3 1-5 2-6-1-1-2-.5-3-.5z" />
          <path d="M12 2v9h10M12 22v-9H2" fill="none" stroke="#000c0f" />
        </svg>
      </button>
      <button aria-label="browser" className={`${slot} w-[52px]`}>
        <svg viewBox="0 0 24 24" className="size-6" aria-hidden="true">
          <path d="M5 13h15c0-11-15-10-15 0 0 8 11 9 14 4" fill="none" stroke="#e6e6e6" strokeWidth="3.400" />
          <path d="M2 21C1 15 14 2 22 3" fill="none" stroke="#e6e6e6" strokeWidth="1.600" />
        </svg>
      </button>
      <button aria-label="notify" className={`${slot} w-[52px]`}>
        <svg viewBox="0 0 28 28" className="size-7" aria-hidden="true">
          <g fill="none" stroke="#ddd" strokeWidth="1.500">
            <path d="M18 9c-7-5-15 0-14 7 1 8 12 9 15 3" />
            <path d="M16 12c-5-3-9 0-8 4s8 4 9-1h-4M12 24c7 0 9-6 8-10" />
          </g>
          <path d="M22 0c4 1 4 4 4 7l2 3H16l2-3c0-3 0-6 4-7zM20 11h4l-2 2z" fill="#e3a50a" />
        </svg>
      </button>
      {apps.map((a) => (
        <button key={a.name} aria-label={a.name} className={`relative w-[45px] ${slot} ${a.on ? "bg-[#343d40]" : ""}`}>
          {a.art ? (
            <svg viewBox="0 0 24 24" className="size-6" aria-hidden="true">
              {a.art}
            </svg>
          ) : (
            <AppLogo s="size-6" />
          )}
          {a.run && <span className={`absolute bottom-0 h-[3px] bg-[#76b9ed] ${a.on ? "inset-x-0" : "inset-x-1"}`} />}
        </button>
      ))}
      <span className="pl-3">链接</span>
      <div className="ml-auto w-12 text-center leading-[17px] whitespace-nowrap">
        <p>17%</p>
        <p>CPU使用</p>
      </div>
      <svg viewBox="0 0 206 20" className="ml-[22px] h-5 w-[206px] shrink-0" fill="none" stroke="#fff" strokeWidth="1.200" aria-hidden="true">
        <path d="M4 13l5.500-6 5.500 6" />
        <path d="M34 4c4 1 4 5 4 8l2 2H28l2-2c0-3 0-7 4-8zM32 16h4" fill="#fff" />
        <path d="M56.500 6.500h11v7h-11zM69 8v4M51 5v3M54 5v3M50 8h5v3h-5zM52.500 11v4h3" />
        <path d="M58 8h8v4h-8z" fill="#fff" />
        <path d="M78 15a11 11 0 0110-10M81 16a8 8 0 017-8M84 16a5 5 0 015-5M87 16a2 2 0 012-2" />
        <path d="M99 8h3l4-4v13l-4-4h-3zM108 8c1 2 1 3 0 5M111 6c2 3 2 6 0 9" />
        <path d="M113.500 4c2 4 2 8 0 13" stroke="#666" />
        <path d="M122.500 4.500h22v12h-22z" />
        <path d="M125 7.500h17M125 10.500h17" strokeDasharray="2 1" />
        <path d="M129 13.500h9" />
        <path d="M157 6h10v6h-10zM162 3v14" />
        <path d="M182 5l13-2 2 13-13 2z" fill="#f04a1d" stroke="none" />
        <path d="M193 7c-4-1-7 0-7 2s7 2 7 4-4 3-7 1" strokeWidth="2" />
      </svg>
      <div className="w-16 text-center leading-[18px] whitespace-nowrap">
        <p>11:16</p>
        <p>2018/7/20</p>
      </div>
      <button aria-label="操作中心" className="mr-[19px] ml-4">
        <svg viewBox="0 0 18 18" className="size-[18px]" aria-hidden="true">
          <path d="M1.500 2.500h15v11H11v3l-3-3H1.500z" fill="none" stroke="#fff" strokeWidth="1.300" />
        </svg>
      </button>
      <span className="mr-1 h-full w-px bg-[#555]" />
    </div>
  );
}

export default function App() {
  return (
    <div className="flex h-screen flex-col overflow-hidden bg-[#f0f0f0] font-['Open_Sans','Noto_Sans_CJK_SC',sans-serif] text-xs text-black">
      <TitleBar />
      <MenuBar />
      <MainToolbar />
      <main className="flex min-h-0 flex-1">
        <NavPanel />
        <div className="ml-[5px] flex min-w-0 flex-1 flex-col">
          <ComponentToolbar />
          <div className="flex min-h-0 flex-1">
            <ComponentList />
            <SectionEditor />
          </div>
        </div>
      </main>
      <StatusBar />
      <Taskbar />
    </div>
  );
}
